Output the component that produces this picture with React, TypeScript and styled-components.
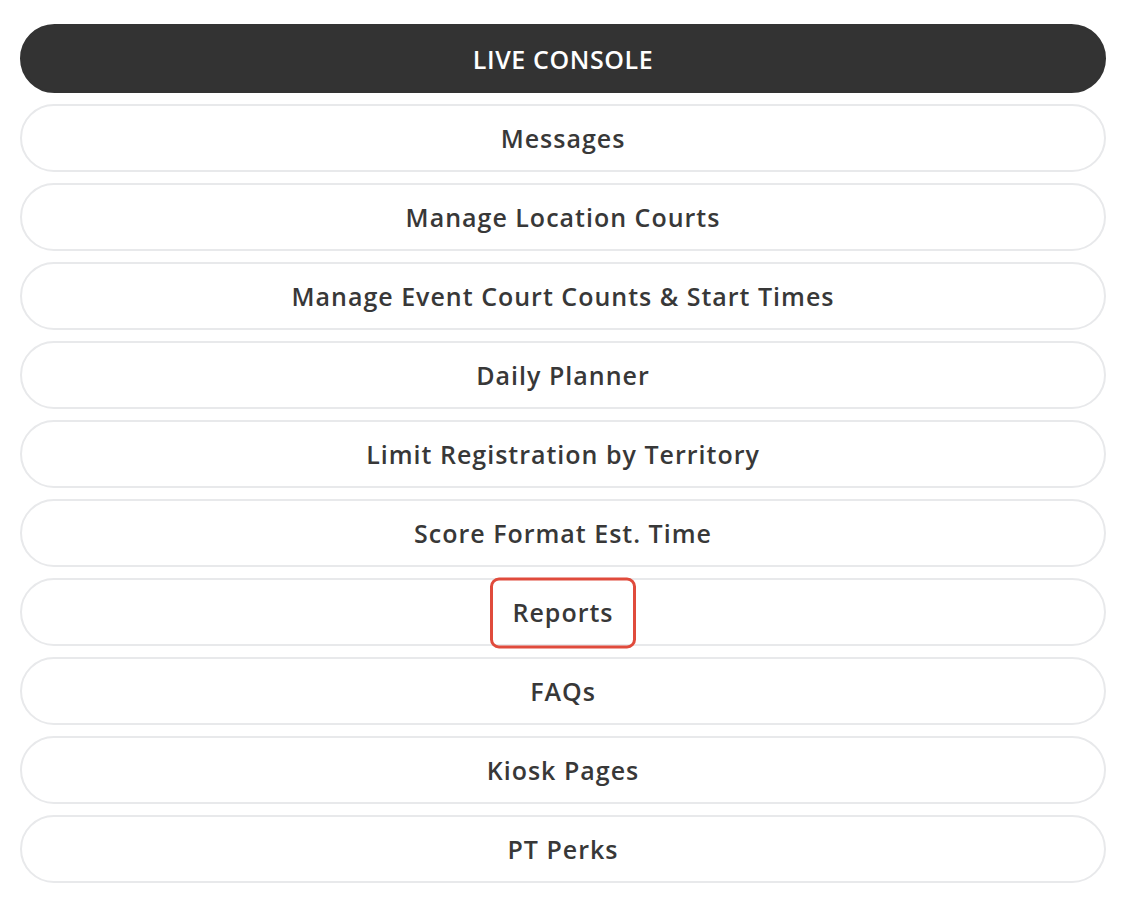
import styled, { createGlobalStyle } from "styled-components";

const GlobalStyle = createGlobalStyle`
  html, body {
    margin: 0;
    padding: 0;
    background: #ffffff;
  }
  body {
    font-family: "Open Sans", "Noto Sans", sans-serif;
  }
`;

const Page = styled.div`
  padding: 24px 35px 30px 20px;
`;

const Menu = styled.nav`
  display: flex;
  flex-direction: column;
  gap: 11px;
  width: 1086px;
`;

const MenuButton = styled.button<{ $primary?: boolean }>`
  position: relative;
  display: flex;
  align-items: center;
  justify-content: center;
  height: ${(p) => (p.$primary ? "69px" : "68px")};
  width: 100%;
  border-radius: 35px;
  border: 2px solid ${(p) => (p.$primary ? "#333333" : "#e8e9eb")};
  background: ${(p) => (p.$primary ? "#333333" : "#ffffff")};
  color: ${(p) => (p.$primary ? "#ffffff" : "#383838")};
  font-family: "Open Sans", "Noto Sans", sans-serif;
  font-size: 25px;
  font-weight: 600;
  letter-spacing: ${(p) => (p.$primary ? "0.6px" : "1px")};
  text-transform: ${(p) => (p.$primary ? "uppercase" : "none")};
  cursor: pointer;
  padding: 0 24px;
`;

const Highlight = styled.span`
  position: absolute;
  left: 50%;
  top: 50%;
  width: 146px;
  height: 71px;
  margin-top: 1px;
  transform: translate(-50%, -50%);
  box-sizing: border-box;
  border: 3px solid #e04b3c;
  border-radius: 9px;
  pointer-events: none;
`;

const items = [
  "Messages",
  "Manage Location Courts",
  "Manage Event Court Counts & Start Times",
  "Daily Planner",
  "Limit Registration by Territory",
  "Score Format Est. Time",
  "Reports",
  "FAQs",
  "Kiosk Pages",
  "PT Perks",
];

const App = () => {
  return (
    <>
      <GlobalStyle />
      <Page>
        <Menu>
          <MenuButton $primary>Live Console</MenuButton>
          {items.map((item) => (
            <MenuButton key={item}>
              {item}
              {item === "Reports" && <Highlight />}
            </MenuButton>
          ))}
        </Menu>
      </Page>
    </>
  );
};

export default App;
